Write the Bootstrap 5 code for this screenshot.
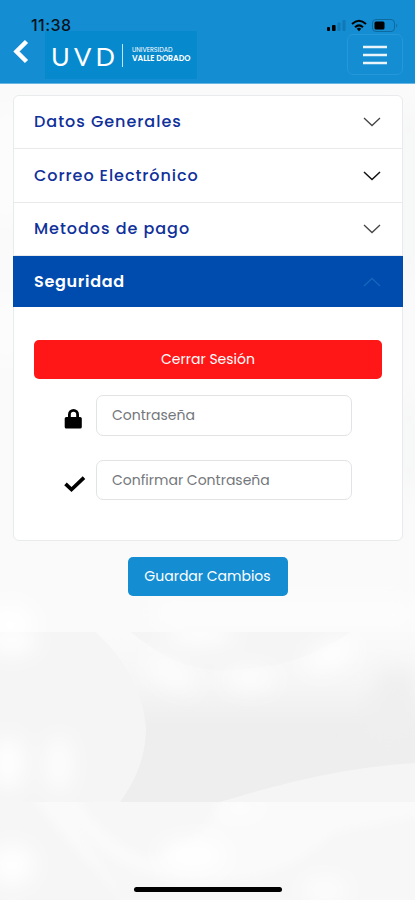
<!DOCTYPE html>
<html lang="es">
<head>
<meta charset="utf-8">
<meta name="viewport" content="width=device-width, initial-scale=1">
<title>UVD - Perfil</title>
<link href="https://cdn.jsdelivr.net/npm/bootstrap@5.3.0/dist/css/bootstrap.min.css" rel="stylesheet">
<style>
  body { font-family: Poppins, Inter, "Open Sans", sans-serif; height: 900px; background: #fafafa; overflow: hidden; }
  svg { display: block; flex-shrink: 0; }
  .backdrop { inset: 0; z-index: -1; }
  .app-header { height: 84px; background: #148dd2; border-bottom: 1px solid #66b5e2; padding: 17px 12px 0 12px; }
  .status-row { height: 14px; padding: 0 4px 0 19px; z-index: 1; }
  .clock { font-family: Inter, sans-serif; font-size: 16px; line-height: 16px; font-weight: 500; color: #06131c; letter-spacing: .45px; }
  .brand-row { height: 48px; }
  .brand { width: 152px; height: 48px; background: #0789ce; margin: 0 0 0 15px; padding: 0 0 0 6px; color: #fff; }
  .brand-initials { font-family: Lato, sans-serif; font-size: 25.5px; line-height: 30px; letter-spacing: 4.2px; width: 71px; padding-top: 1px; }
  .brand-rule { width: 1px; height: 23px; background: #c5e4f5; margin: 1px 9px 0 0; }
  .brand-name { font-size: 7.9px; line-height: 9px; letter-spacing: -.05px; font-weight: 600; white-space: nowrap; margin-top: -1px; }
  .brand-name span { font-size: 6.4px; letter-spacing: 0; font-weight: 400; display: block; line-height: 8px; }
  .menu-btn { width: 56px; height: 41px; margin: 3px 0 0 auto; padding: 0; border: 1px solid #2498d8; border-radius: 6px; }
  .profile { margin: 11px 12px 0 13px; height: 446px; --bs-accordion-border-color: #e9eaeb; --bs-accordion-border-radius: 6px; --bs-accordion-inner-border-radius: 5px; border: 1px solid #e9eaeb; border-radius: 6px; background: #fff; }
  .profile .accordion-item { border-width: 0 0 1px; height: 53.4px; }
  .profile .accordion-item.opened { height: auto; border: 0; background: transparent; }
  .profile .accordion-button { height: 100%; padding: 0 21px 0 20px; font-size: 16px; font-weight: 500; color: #10309a; background: transparent; box-shadow: none; }
  .profile .accordion-button::after { display: none; }
  .profile .opened .accordion-button { height: 51px; background: #004bae; color: #fff; margin: 0 -1px; padding: 0 22px 0 21px; width: calc(100% + 2px); }
  .profile .accordion-body { padding: 33px 20px 0; }
  .logout { background: #ff1617; color: #fff; height: 39px; padding: 0; font-size: 14px; border: 0; border-radius: 5px; }
  .field-row { padding-left: 30px; }
  .field-icon { width: 32px; }
  .lock { margin-top: 6px; }
  .field-row .form-control { width: 256px; height: 41px; border: 1.5px solid #e2e3e5; border-radius: 7px; padding: 0 15px; font-size: 14px; }
  .field-row .form-control.confirm { height: 40px; }
  .field-row .form-control::placeholder { color: #74777b; opacity: 1; }
  .save { width: 160px; height: 39px; padding: 0; background: #148dd2; color: #fff; border: 0; border-radius: 5px; font-size: 14px; margin-top: 16px; }
  .home-bar { width: 148px; height: 5px; border-radius: 3px; background: #000; margin-bottom: 8px; }
  .ls-a { letter-spacing: .97px; } .ls-b { letter-spacing: .93px; } .ls-m { letter-spacing: .97px; } .ls-c { font-weight: 600; letter-spacing: .7px; }
</style>
<script src="https://cdn.jsdelivr.net/npm/bootstrap@5.3.0/dist/js/bootstrap.bundle.min.js"></script>
</head>
<body class="d-flex flex-column position-relative">
<svg class="backdrop position-absolute" width="415" height="900" viewBox="0 0 415 900" aria-hidden="true">
  <defs>
    <filter id="soft" x="-50%" y="-50%" width="200%" height="200%"><feGaussianBlur stdDeviation="11"/></filter>
    <filter id="faint" x="-20%" y="-20%" width="140%" height="140%"><feGaussianBlur stdDeviation="4"/></filter>
    <linearGradient id="shade" x1="0" y1="0" x2="0" y2="1"><stop offset="0" stop-color="#fafafa"/><stop offset=".3" stop-color="#f6f6f6"/><stop offset=".55" stop-color="#eeeeee"/><stop offset="1" stop-color="#eeeeee"/></linearGradient>
    <clipPath id="tile"><path d="M0 632H415V802H0Z"/></clipPath>
    <clipPath id="tile2"><path d="M0 802H415V900H0Z"/></clipPath>
  </defs>
  <path d="M0 84H415V632H0Z" fill="#fafafa"/>
  <g filter="url(#soft)"><path d="M403 110h12v170h-12zM403 400h12v90h-12z" fill="#f3f4f4"/><path d="M0 110h13v110H0zM0 300h13v60H0z" fill="#fff"/><path d="M150 600H415V628H160Z" fill="#fdfdfd"/><ellipse cx="10" cy="625" rx="25" ry="22" fill="#fff"/></g>
  <g clip-path="url(#tile)">
    <path d="M0 632H415V802H0Z" fill="url(#shade)"/>
    <path d="M380 670H415V740H360Z" fill="#efefef" filter="url(#soft)"/>
    <path d="M130 632H350C305 665 250 673 205 669C170 664 150 646 130 632Z" fill="#f5f5f5"/>
    <path d="M0 632H95C127 660 144 695 146 730C145 762 133 784 120 802H0Z" fill="#f5f5f5"/>
    <path d="M220 802C280 784 340 768 415 763V802Z" fill="#f5f5f5"/>
    <g filter="url(#soft)"><ellipse cx="171" cy="674" rx="28" ry="9" transform="rotate(30 171 674)" fill="#fff"/><ellipse cx="250" cy="679" rx="26" ry="9" fill="#fff"/><ellipse cx="331" cy="655" rx="28" ry="12" transform="rotate(-25 331 655)" fill="#fff"/><ellipse cx="200" cy="633" rx="36" ry="11" fill="#fff"/><ellipse cx="12" cy="640" rx="25" ry="15" fill="#fff"/><ellipse cx="8" cy="763" rx="16" ry="27" fill="#fff"/><ellipse cx="59" cy="764" rx="11" ry="28" fill="#fff"/></g>
  </g>
  <g clip-path="url(#tile2)">
    <path d="M0 802H415V900H0Z" fill="#fafafa"/>
    <g filter="url(#faint)">
      <path d="M-10 795H32C65 845 98 865 130 910H-10Z" fill="#f6f6f6"/>
      <path d="M77 795H222C210 830 184 848 152 858C118 847 95 828 77 795Z" fill="#f7f7f7"/>
      <path d="M60 800C90 850 130 885 210 880C270 882 305 860 335 832L425 815V910H130Z" fill="#f7f7f7"/>
    </g>
    <g filter="url(#soft)"><ellipse cx="193" cy="856" rx="34" ry="16" fill="#fff"/><ellipse cx="12" cy="865" rx="22" ry="20" fill="#fff"/><ellipse cx="325" cy="890" rx="22" ry="10" fill="#fff"/><ellipse cx="240" cy="808" rx="22" ry="6" fill="#fff"/></g>
  </g>
</svg>

<header class="app-header flex-shrink-0">
  <div class="status-row position-relative d-flex justify-content-between align-items-start">
    <span class="clock">11:38</span>
    <svg width="72" height="16" viewBox="0 0 72 16" aria-label="Estado">
      <rect x="0" y="10" width="3" height="4" rx="1"/><rect x="5" y="8" width="3.6" height="6" rx="1"/><rect x="10.500" y="5.500" width="3" height="8.500" rx="1" fill="#0f78b5"/><rect x="15.500" y="3" width="3" height="11" rx="1" fill="#0f78b5"/>
      <g fill="none" stroke="#000" stroke-width="2"><path d="M25 7q7-6.500 14 0M28 10.200q4-3.600 8 0"/></g><path d="M29.700 11.700q2.300-1.700 4.600 0L32 14.200z"/>
      <rect x="45.500" y="2.500" width="22" height="12" rx="3.500" fill="none" stroke="#0d6a9f"/><rect x="47.500" y="4.500" width="10" height="8" rx="1.500"/><path d="M69.300 6.500q2 2 0 4z" fill="#0d6a9f"/>
    </svg>
  </div>
  <div class="brand-row d-flex align-items-start">
    <svg width="18" height="36" viewBox="0 0 18 36" aria-label="Volver"><path d="M14.500 10.500L4.500 20.500L14.500 30.500" fill="none" stroke="#fff" stroke-width="4.500"/></svg>
    <div class="brand d-flex align-items-center">
      <div class="brand-initials">UVD</div>
      <div class="brand-rule"></div>
      <div class="brand-name"><span>UNIVERSIDAD</span>VALLE DORADO</div>
    </div>
    <button class="menu-btn btn d-flex align-items-center justify-content-center" aria-label="Menú">
      <svg width="26" height="22" viewBox="0 0 26 22"><path d="M1 3H25M1 11H25M1 19H25" stroke="#eaf5fb" stroke-width="2.700"/></svg>
    </button>
  </div>
</header>

<main class="flex-grow-1 d-flex flex-column">
  <div class="accordion profile">
    <div class="accordion-item">
      <button class="accordion-button collapsed justify-content-between"><span class="ls-a">Datos Generales</span><svg width="18" height="10" viewBox="0 0 18 10"><path d="M1 1L9 8.500L17 1" fill="none" stroke="#444" stroke-width="1.300"/></svg></button>
    </div>
    <div class="accordion-item">
      <button class="accordion-button collapsed justify-content-between"><span class="ls-b">Correo Electrónico</span><svg width="18" height="10" viewBox="0 0 18 10"><path d="M1 1L9 8.500L17 1" fill="none" stroke="#111" stroke-width="1.500"/></svg></button>
    </div>
    <div class="accordion-item">
      <button class="accordion-button collapsed justify-content-between"><span class="ls-m">Metodos de pago</span><svg width="18" height="10" viewBox="0 0 18 10"><path d="M1 1L9 8.500L17 1" fill="none" stroke="#444" stroke-width="1.300"/></svg></button>
    </div>
    <div class="accordion-item opened">
      <button class="accordion-button justify-content-between"><span class="ls-c">Seguridad</span><svg width="18" height="10" viewBox="0 0 18 10"><path d="M1 9L9 1.500L17 9" fill="none" stroke="#1467bd" stroke-width="1.300"/></svg></button>
      <div class="accordion-body">
        <button class="btn logout w-100 d-block">Cerrar Sesión</button>
        <div class="field-row d-flex align-items-center mt-3">
          <div class="field-icon"><svg width="20" height="22" viewBox="0 0 20 22" class="lock"><path d="M2.800 9H4V6.500a5.500 5.500 0 0 1 11 0V9h1.200a1.600 1.600 0 0 1 1.600 1.600v8.300a1.600 1.600 0 0 1-1.600 1.600H2.300A1.600 1.600 0 0 1 .700 18.900v-8.300A1.600 1.600 0 0 1 2.300 9zM6.800 9h5.400V6.500a2.700 2.700 0 0 0-5.400 0z"/></svg></div>
          <input class="form-control" type="password" placeholder="Contraseña" aria-label="Contraseña">
        </div>
        <div class="field-row d-flex align-items-center mt-4">
          <div class="field-icon"><svg width="22" height="18" viewBox="0 0 22 18" class="mt-2"><path d="M1.500 8.800L7.500 14.500L20 2.600" fill="none" stroke="#000" stroke-width="3.700"/></svg></div>
          <input class="form-control confirm" type="password" placeholder="Confirmar Contraseña" aria-label="Confirmar Contraseña">
        </div>
      </div>
    </div>
  </div>
  <button class="btn save align-self-center">Guardar Cambios</button>
  <div class="home-bar mx-auto mt-auto"></div>
</main>
</body>
</html>
